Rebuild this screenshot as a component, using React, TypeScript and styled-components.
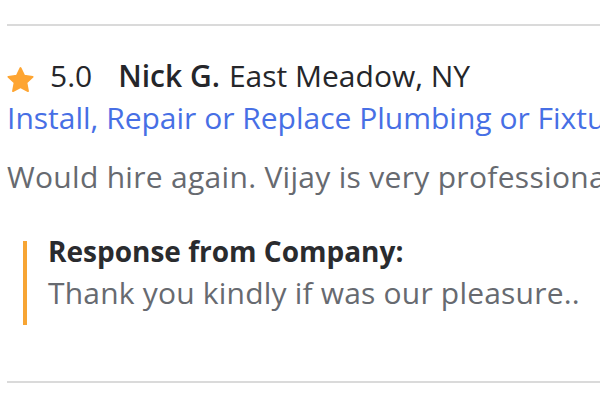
import React from "react";
import styled, { createGlobalStyle } from "styled-components";

const GlobalStyle = createGlobalStyle`
  html, body {
    margin: 0;
    padding: 0;
    background: #ffffff;
  }
  body {
    font-family: "Open Sans", "DejaVu Sans", sans-serif;
  }
`;

const Page = styled.div`
  width: 600px;
  height: 400px;
  overflow: hidden;
  padding: 24px 0 0 7px;
  box-sizing: border-box;
`;

const Divider = styled.hr`
  margin: 0;
  border: none;
  border-top: 2px solid #dadada;
  width: 700px;
`;

const Review = styled.div`
  padding-top: 32px;
  white-space: nowrap;
`;

const Header = styled.div`
  display: flex;
  align-items: center;
  font-size: 30px;
  line-height: 36px;
  color: #25262a;
`;

const Rating = styled.span`
  display: flex;
  align-items: center;
  gap: 16px;
  margin-right: 26px;

  svg {
    margin-top: 8px;
  }
`;

const Name = styled.span`
  font-weight: 600;
  margin-right: 9px;
`;

const Service = styled.a`
  display: block;
  font-size: 30px;
  line-height: 48px;
  color: #476fe5;
  text-decoration: none;
`;

const Body = styled.p`
  margin: 15px 0 0 0;
  font-size: 30px;
  line-height: 40px;
  letter-spacing: 0.3px;
  color: #676a70;
`;

const Response = styled.div`
  margin: 44px 0 56px 16px;
  padding-left: 21px;
  border-left: 4px solid #f7a534;
`;

const ResponseTitle = styled.div`
  font-size: 28px;
  font-weight: 700;
  line-height: 20px;
  color: #2a2b2e;
`;

const ResponseText = styled.div`
  font-size: 30px;
  line-height: 64px;
  letter-spacing: 0.2px;
  color: #676a70;
`;

const Star = () => (
  <svg width="27" height="26" viewBox="0 0 24 23">
    <path
      d="M12 0.8l3.3 6.9 7.5 1-5.5 5.2 1.4 7.5L12 17.8l-6.7 3.6 1.4-7.5L1.2 8.7l7.5-1z"
      fill="#fea532"
      stroke="#fea532"
      strokeWidth="1.6"
      strokeLinejoin="round"
    />
  </svg>
);

export default function App() {
  return (
    <>
      <GlobalStyle />
      <Page>
        <Divider />
        <Review>
          <Header>
            <Rating>
              <Star />
              5.0
            </Rating>
            <Name>Nick G.</Name>
            East Meadow, NY
          </Header>
          <Service href="#">
            Install, Repair or Replace Plumbing or Fixtures
          </Service>
          <Body>Would hire again. Vijay is very professional and does great work.</Body>
          <Response>
            <ResponseTitle>Response from Company:</ResponseTitle>
            <ResponseText>Thank you kindly if was our pleasure..</ResponseText>
          </Response>
        </Review>
        <Divider />
      </Page>
    </>
  );
}
